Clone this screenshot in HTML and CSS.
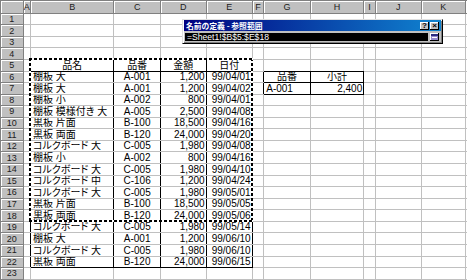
FILE: index.html
```html
<!DOCTYPE html>
<html lang="ja">

<head>
    <meta charset="UTF-8">
    <meta name="viewport" content="width=device-width, initial-scale=1.0">
    <title>名前の定義 - 参照範囲</title>
    <link rel="stylesheet" href="styles.css">
</head>

<body>
    <div class="sheet">
        <table class="grid">
            <colgroup>
                <col class="w-hdr"><col class="w-a"><col class="w-b"><col class="w-c"><col class="w-d"><col class="w-e">
                <col class="w-f"><col class="w-g"><col class="w-h"><col class="w-i"><col class="w-j"><col class="w-k"><col class="w-l">
            </colgroup>
            <tr class="hdr"><th class="corner"></th><th>A</th><th>B</th><th>C</th><th>D</th><th>E</th><th>F</th><th>G</th><th>H</th><th>I</th><th>J</th><th>K</th><th></th></tr>
            <tr><th>1</th><td></td><td></td><td></td><td></td><td></td><td></td><td></td><td></td><td></td><td></td><td></td><td></td></tr>
            <tr><th>2</th><td></td><td></td><td></td><td></td><td></td><td></td><td></td><td></td><td></td><td></td><td></td><td></td></tr>
            <tr><th>3</th><td></td><td></td><td></td><td></td><td></td><td></td><td></td><td></td><td></td><td></td><td></td><td></td></tr>
            <tr><th>4</th><td></td><td class="b"></td><td class="b"></td><td class="b"></td><td class="b"></td><td></td><td></td><td></td><td></td><td></td><td></td><td></td></tr>
            <tr><th>5</th><td class="r"></td><td class="c r b">品名</td><td class="c r b">品番</td><td class="c r b">金額</td><td class="c r b">日付</td><td></td><td class="b"></td><td class="b"></td><td></td><td></td><td></td><td></td></tr>
            <tr><th>6</th><td class="r"></td><td class="r">棚板 大</td><td class="c r">A-001</td><td class="n r">1,200</td><td class="n r">99/04/01</td><td class="r"></td><td class="c r b">品番</td><td class="c r b">小計</td><td></td><td></td><td></td><td></td></tr>
            <tr><th>7</th><td class="r"></td><td class="r">棚板 大</td><td class="c r">A-001</td><td class="n r">1,200</td><td class="n r">99/04/02</td><td class="r"></td><td class="r b">A-001</td><td class="n r b">2,400</td><td></td><td></td><td></td><td></td></tr>
            <tr><th>8</th><td class="r"></td><td class="r">棚板 小</td><td class="c r">A-002</td><td class="n r">800</td><td class="n r">99/04/01</td><td></td><td></td><td></td><td></td><td></td><td></td><td></td></tr>
            <tr><th>9</th><td class="r"></td><td class="r">棚板 模様付き 大</td><td class="c r">A-005</td><td class="n r">2,500</td><td class="n r">99/04/08</td><td></td><td></td><td></td><td></td><td></td><td></td><td></td></tr>
            <tr><th>10</th><td class="r"></td><td class="r">黒板 片面</td><td class="c r">B-100</td><td class="n r">18,500</td><td class="n r">99/04/16</td><td></td><td></td><td></td><td></td><td></td><td></td><td></td></tr>
            <tr><th>11</th><td class="r"></td><td class="r">黒板 両面</td><td class="c r">B-120</td><td class="n r">24,000</td><td class="n r">99/04/20</td><td></td><td></td><td></td><td></td><td></td><td></td><td></td></tr>
            <tr><th>12</th><td class="r"></td><td class="r">コルクボード 大</td><td class="c r">C-005</td><td class="n r">1,980</td><td class="n r">99/04/08</td><td></td><td></td><td></td><td></td><td></td><td></td><td></td></tr>
            <tr><th>13</th><td class="r"></td><td class="r">棚板 小</td><td class="c r">A-002</td><td class="n r">800</td><td class="n r">99/04/16</td><td></td><td></td><td></td><td></td><td></td><td></td><td></td></tr>
            <tr><th>14</th><td class="r"></td><td class="r">コルクボード 大</td><td class="c r">C-005</td><td class="n r">1,980</td><td class="n r">99/04/10</td><td></td><td></td><td></td><td></td><td></td><td></td><td></td></tr>
            <tr><th>15</th><td class="r"></td><td class="r">コルクボード 中</td><td class="c r">C-106</td><td class="n r">1,200</td><td class="n r">99/04/24</td><td></td><td></td><td></td><td></td><td></td><td></td><td></td></tr>
            <tr><th>16</th><td class="r"></td><td class="r">コルクボード 大</td><td class="c r">C-005</td><td class="n r">1,980</td><td class="n r">99/05/01</td><td></td><td></td><td></td><td></td><td></td><td></td><td></td></tr>
            <tr><th>17</th><td class="r"></td><td class="r">黒板 片面</td><td class="c r">B-100</td><td class="n r">18,500</td><td class="n r">99/05/05</td><td></td><td></td><td></td><td></td><td></td><td></td><td></td></tr>
            <tr><th>18</th><td class="r"></td><td class="r">黒板 両面</td><td class="c r">B-120</td><td class="n r">24,000</td><td class="n r">99/05/06</td><td></td><td></td><td></td><td></td><td></td><td></td><td></td></tr>
            <tr><th>19</th><td class="r"></td><td class="r">コルクボード 大</td><td class="c r">C-005</td><td class="n r">1,980</td><td class="n r">99/05/14</td><td></td><td></td><td></td><td></td><td></td><td></td><td></td></tr>
            <tr><th>20</th><td class="r"></td><td class="r">棚板 大</td><td class="c r">A-001</td><td class="n r">1,200</td><td class="n r">99/06/10</td><td></td><td></td><td></td><td></td><td></td><td></td><td></td></tr>
            <tr><th>21</th><td class="r"></td><td class="r">コルクボード 大</td><td class="c r">C-005</td><td class="n r">1,980</td><td class="n r">99/06/10</td><td></td><td></td><td></td><td></td><td></td><td></td><td></td></tr>
            <tr><th>22</th><td class="r"></td><td class="r b">黒板 両面</td><td class="c r b">B-120</td><td class="n r b">24,000</td><td class="n r b">99/06/15</td><td></td><td></td><td></td><td></td><td></td><td></td><td></td></tr>
            <tr><th>23</th><td></td><td></td><td></td><td></td><td></td><td></td><td></td><td></td><td></td><td></td><td></td><td></td></tr>
            <tr><th></th><td></td><td></td><td></td><td></td><td></td><td></td><td></td><td></td><td></td><td></td><td></td><td></td></tr>
        </table>

        <!-- copy marquee around B5:E18 -->
        <div class="marquee"></div>

        <!-- collapsed 名前の定義 dialog -->
        <div class="dialog">
            <div class="titlebar">
                <span class="title">名前の定義 - 参照範囲</span>
                <span class="tbtn">?</span>
                <span class="tbtn">×</span>
            </div>
            <div class="refbar">
                <div class="refedit">=Sheet1!$B$5:$E$18</div>
                <span class="collapse">
                    <svg width="7" height="6" viewBox="0 0 7 6">
                        <rect x="0" y="0" width="7" height="6" fill="#9488cc"/>
                        <rect x="0" y="0" width="7" height="2" fill="#2c2c80"/>
                        <rect x="1" y="3" width="5" height="1" fill="#fff"/>
                    </svg>
                </span>
            </div>
        </div>
    </div>
</body>

</html>
```

FILE: styles.css
```css
html,
body {
    margin: 0;
    overflow: hidden;
    background-color: #fff;
}

body {
    font-family: "Liberation Sans", "Noto Sans CJK JP", sans-serif;
    font-size: 10px;
    color: #000;
    font-feature-settings: "palt";
}

.sheet {
    position: relative;
    width: 467px;
    height: 280px;
    overflow: hidden;
}

/* Grid */
.grid {
    border-collapse: collapse;
    table-layout: fixed;
    width: 510px;
}

.w-hdr { width: 22.7px; }
.w-a { width: 7.3px; }
.w-b { width: 83.3px; }
.w-c { width: 46.7px; }
.w-d { width: 45.7px; }
.w-e { width: 46px; }
.w-f { width: 11.6px; }
.w-g { width: 46.7px; }
.w-h { width: 53.3px; }
.w-i { width: 11.7px; }
.w-j { width: 45.7px; }
.w-k { width: 44.3px; }
.w-l { width: 45px; }

.grid tr {
    height: 11.57px;
}

.grid tr.hdr {
    height: 12.7px;
}

.grid td {
    border: 1px solid #c0c0c0;
    padding: 0 2px;
    line-height: 10px;
    vertical-align: bottom;
    white-space: nowrap;
    overflow: hidden;
}

.grid th {
    background-color: #c0c0c0;
    border: 1px solid #808080;
    box-shadow: inset 1px 1px 0 #fff;
    padding: 0;
    font-weight: normal;
    font-size: 9px;
    line-height: 10px;
    color: #202020;
}

.grid td.c { text-align: center; }
.grid td.n { text-align: right; padding-right: 1px; }
.grid td.r { border-right-color: #000; }
.grid td.b { border-bottom-color: #000; }

/* Copy marquee */
.marquee {
    position: absolute;
    left: 29px;
    top: 58px;
    width: 224px;
    height: 164px;
    pointer-events: none;
    background:
        repeating-linear-gradient(90deg, #000 0 3px, #fff 3px 5px) left top / 100% 2px no-repeat,
        repeating-linear-gradient(90deg, #000 0 3px, #fff 3px 5px) left bottom / 100% 2px no-repeat,
        repeating-linear-gradient(180deg, #000 0 3px, #fff 3px 5px) left top / 2px 100% no-repeat,
        repeating-linear-gradient(180deg, #000 0 3px, #fff 3px 5px) right top / 2px 100% no-repeat;
}

/* Dialog */
.dialog {
    position: absolute;
    left: 182px;
    top: 19px;
    width: 261px;
    height: 25px;
    box-sizing: border-box;
    background-color: #c0c0c0;
    border: 1px solid;
    border-color: #dfdfdf #000 #000 #dfdfdf;
    box-shadow: inset 1px 1px 0 #fff, inset -1px -1px 0 #808080;
    padding: 0 1px 2px;
    display: flex;
    flex-direction: column;
    gap: 2px;
}

.titlebar {
    height: 11px;
    background: linear-gradient(90deg, #000080, #1084d0);
    display: flex;
    align-items: center;
    gap: 1px;
    padding: 0 2px;
    color: #fff;
}

.title {
    flex: 1;
    font-family: "Noto Sans CJK JP", sans-serif;
    font-size: 7.8px;
    font-weight: bold;
    line-height: 11px;
    white-space: nowrap;
}

.tbtn,
.collapse {
    width: 9px;
    height: 8px;
    background-color: #c0c0c0;
    box-shadow: inset -1px -1px 0 #000, inset 1px 1px 0 #fff;
    color: #000;
    font-size: 8px;
    font-weight: bold;
    line-height: 8px;
    text-align: center;
}

.refbar {
    height: 8px;
    display: flex;
    gap: 2px;
    padding: 0 2px 0 1px;
}

.refedit {
    flex: 1;
    background-color: #000;
    color: #fff;
    font-size: 8.6px;
    line-height: 8px;
    padding-left: 2px;
    white-space: nowrap;
    overflow: hidden;
}

.collapse {
    display: flex;
    align-items: center;
    justify-content: center;
}
```
